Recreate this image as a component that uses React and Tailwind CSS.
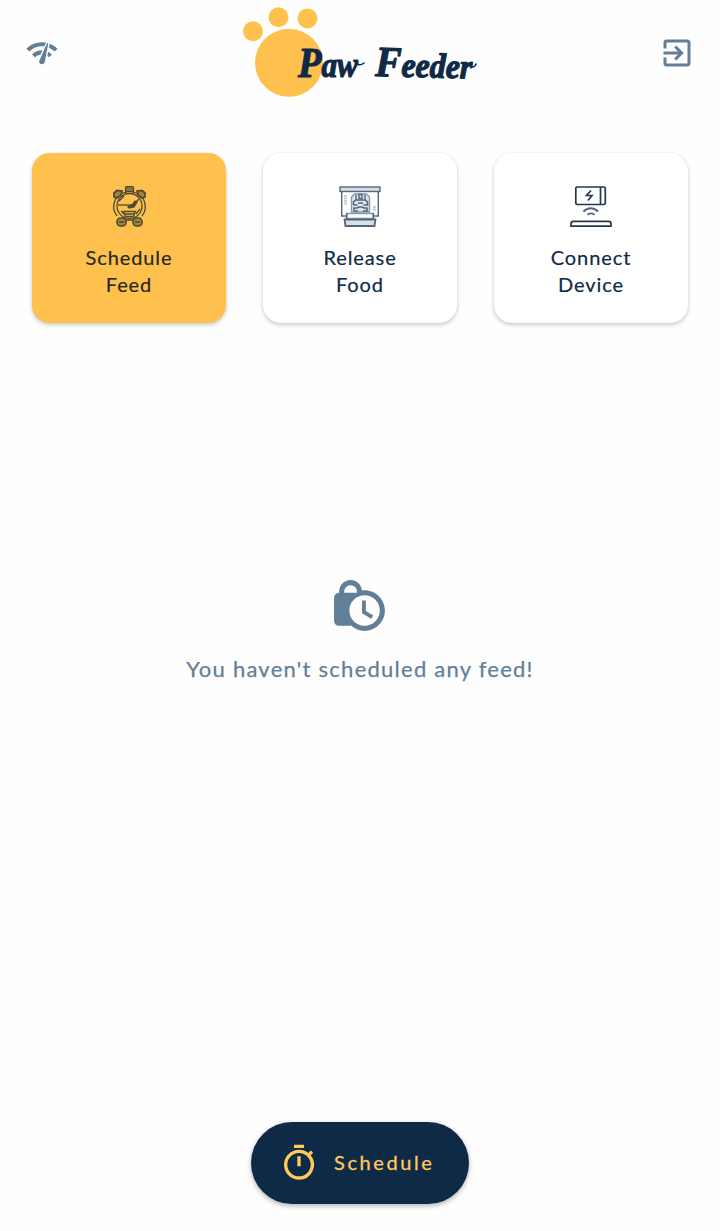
import React from "react";
import { MdNetworkCheck, MdOutlineExitToApp, MdLockClock, MdOutlineTimer } from "react-icons/md";

function Logo() {
  return (
    <svg className="ml-0.5" width="244" height="100" viewBox="238 0 244 100" role="img" aria-label="Paw Feeder">
      <g fill="#ffc14d">
        <circle cx="289" cy="62.8" r="34" />
        <circle cx="253" cy="31.2" r="10" />
        <circle cx="278.5" cy="17.2" r="10" />
        <circle cx="307.5" cy="18.4" r="10" />
      </g>
      <g
        fill="#0f2a47"
        stroke="#0f2a47"
        strokeWidth="1.2"
        strokeLinejoin="round"
        fontFamily="'Liberation Serif', serif"
        fontWeight="700"
        fontStyle="italic"
        fontSize="35"
      >
        <text x="298" y="77" textLength="60" lengthAdjust="spacingAndGlyphs">
          <tspan fontSize="43">P</tspan>aw
        </text>
        <text x="375" y="76" textLength="97" lengthAdjust="spacingAndGlyphs" transform="rotate(1.5 375 76)">
          <tspan fontSize="43">F</tspan>eeder
        </text>
      </g>
      <path d="M356 62c1 3.500 5 3.500 8 1" fill="none" stroke="#0f2a47" strokeLinecap="round" strokeWidth="1.6" />
      <path d="M471 66c2 2 4 1 5-2" fill="none" stroke="#0f2a47" strokeLinecap="round" strokeWidth="1.6" />
    </svg>
  );
}

function AlarmIcon() {
  return (
    <svg width="42" height="42" viewBox="0 0 42 42" fill="none" stroke="#4a4932" strokeWidth="1.3">
      <circle cx="21.5" cy="21" r="12.5" />
      <path d="M8 13c-3 6-3 13 1 18M35 13c3 6 3 13-1 18" />
      <rect x="17.5" y="1.7" width="8" height="5" rx="1" fill="#8b743f" />
      <path d="M18 6v3M25 6v3M12 9l6-2M31 9l-6-2" />
      <path d="M6 12V8l3-2.5 5 .5-1 4-4 3zM37 12V8l-3-2.5-5 .5 1 4 4 3z" fill="#a38442" strokeWidth="1.7" />
      <path d="M10 20h14" />
      <path d="M20 22l5-3 2-3 2 1-3 5-5 1z" fill="#4a4932" />
      <path d="M27 18l4-4M11 16l5-5M13 26l3 3M32 24l-4 5" />
      <path d="M15.5 26.5h12l-2 5h-8zM17 29h9" />
      <rect x="9" y="33" width="9" height="8" rx="3.5" fill="#a38442" strokeWidth="1.6" />
      <rect x="25" y="33" width="9" height="8" rx="3.5" fill="#a38442" strokeWidth="1.6" />
      <path d="M11 37h5M27 37h5M18 35h7" />
    </svg>
  );
}

function DispenserIcon() {
  return (
    <svg width="42" height="42" viewBox="0 0 42 42" fill="none" stroke="#52677e" strokeWidth="1.4">
      <rect x="1" y="2" width="40" height="4.5" fill="#d5dce3" />
      <path d="M2.7 7v24h4M39.3 7v24h-4" />
      <path d="M12.5 27V12l3-3h12l3 3v15z" fill="#dfe4ea" stroke="#8797a7" />
      <path d="M17 10v5M26 10v5M20 9.5h3v4h-3z" />
      <path d="M14.5 20v-3l2.500-2h9l2.500 2v3h-4M14.500 20h4M19 18h5M15 26v-3h3l2-1h3l2 1h3v3h-4M15 26h4" strokeWidth="1.6" />
      <path d="M8 28.500h26v5H8z" fill="#fff" stroke="#8797a7" />
      <path d="M7.500 28v6M34.500 28v6" />
      <path d="M5.500 34.500h31l-1 6.500h-29z" fill="#d9e0e6" strokeWidth="1.800" />
      <path d="M5 11h3M5 13.500h3M5 16h3M5 18.500h3M34 22h3M34 24.500h3" stroke="#b5c0cb" />
    </svg>
  );
}

function ChargerIcon() {
  return (
    <svg width="42" height="42" viewBox="0 0 42 42" fill="none" stroke="#20394f" strokeWidth="1.7">
      <rect x="5.8" y="2" width="29.5" height="17.500" rx="1.5" />
      <path d="M30.500 2v17" />
      <path d="M21 5.500l-4.500 5h5.500l-4 5" />
      <path d="M13.500 26.500c4-4.500 10.500-4.500 14.500 0" stroke="#50657b" strokeWidth="2" />
      <path d="M17.500 29.800c2-1.800 5-1.800 7 0" stroke="#50657b" strokeWidth="2" />
      <path d="M1 41.200v-2.500c0-1.500 1-2.400 2.400-2.400h35.200c1.400 0 2.400.9 2.400 2.400v2.500z" />
    </svg>
  );
}

const actions = [
  { top: "Schedule", bottom: "Feed", Icon: AlarmIcon, active: true },
  { top: "Release", bottom: "Food", Icon: DispenserIcon },
  { top: "Connect", bottom: "Device", Icon: ChargerIcon },
];

function ActionCard({ top, bottom, Icon, active }) {
  return (
    <button
      className={`flex h-[170px] w-[194px] flex-col items-center rounded-[18px] pt-8 shadow-[0_2px_4px_rgba(0,0,0,0.2),0_0_2px_rgba(0,0,0,0.06)] ${
        active ? "bg-[#ffc14d] text-[#25291f]" : "bg-white text-[#0f2a47]"
      }`}
    >
      <Icon />
      <span className="mt-[17px] flex flex-col items-center text-[20px] leading-[27px] tracking-[0.9px] [-webkit-text-stroke:0.2px_currentColor]">
        <span>{top}</span>
        <span>{bottom}</span>
      </span>
    </button>
  );
}

export default function App() {
  return (
    <div className="flex h-[1231px] w-[720px] flex-col bg-[#fefefe] font-['Lato',sans-serif]">
      <header className="flex h-[100px] items-start justify-between px-[25px]">
        <button aria-label="Network" className="mt-9 text-[#627f98]">
          <MdNetworkCheck size={34} />
        </button>
        <Logo />
        <button aria-label="Exit" className="mt-[35px] text-[#627f98]">
          <MdOutlineExitToApp size={36} />
        </button>
      </header>

      <nav className="mt-[53px] flex justify-between px-8">
        {actions.map((a) => (
          <ActionCard key={a.top} {...a} />
        ))}
      </nav>

      <main className="mt-[252px] flex flex-1 flex-col items-center text-[#627f98]">
        <MdLockClock size={61} className="mr-0.5" />
        <p className="mt-[18px] text-[22px] leading-[30px] tracking-[1.25px] [-webkit-text-stroke:0.25px_currentColor]">
          You haven't scheduled any feed!
        </p>
      </main>

      <footer className="flex justify-center pb-[27px]">
        <button className="flex h-[82px] w-[218px] items-center rounded-full bg-[#0f2a47] pl-7 text-[#ffc95c] shadow-[0_2px_5px_rgba(0,0,0,0.3)]">
          <MdOutlineTimer size={40} />
          <span className="ml-[15px] -mt-0.5 text-[20px] tracking-[2.6px] [-webkit-text-stroke:0.3px_currentColor]">Schedule</span>
        </button>
      </footer>
    </div>
  );
}
